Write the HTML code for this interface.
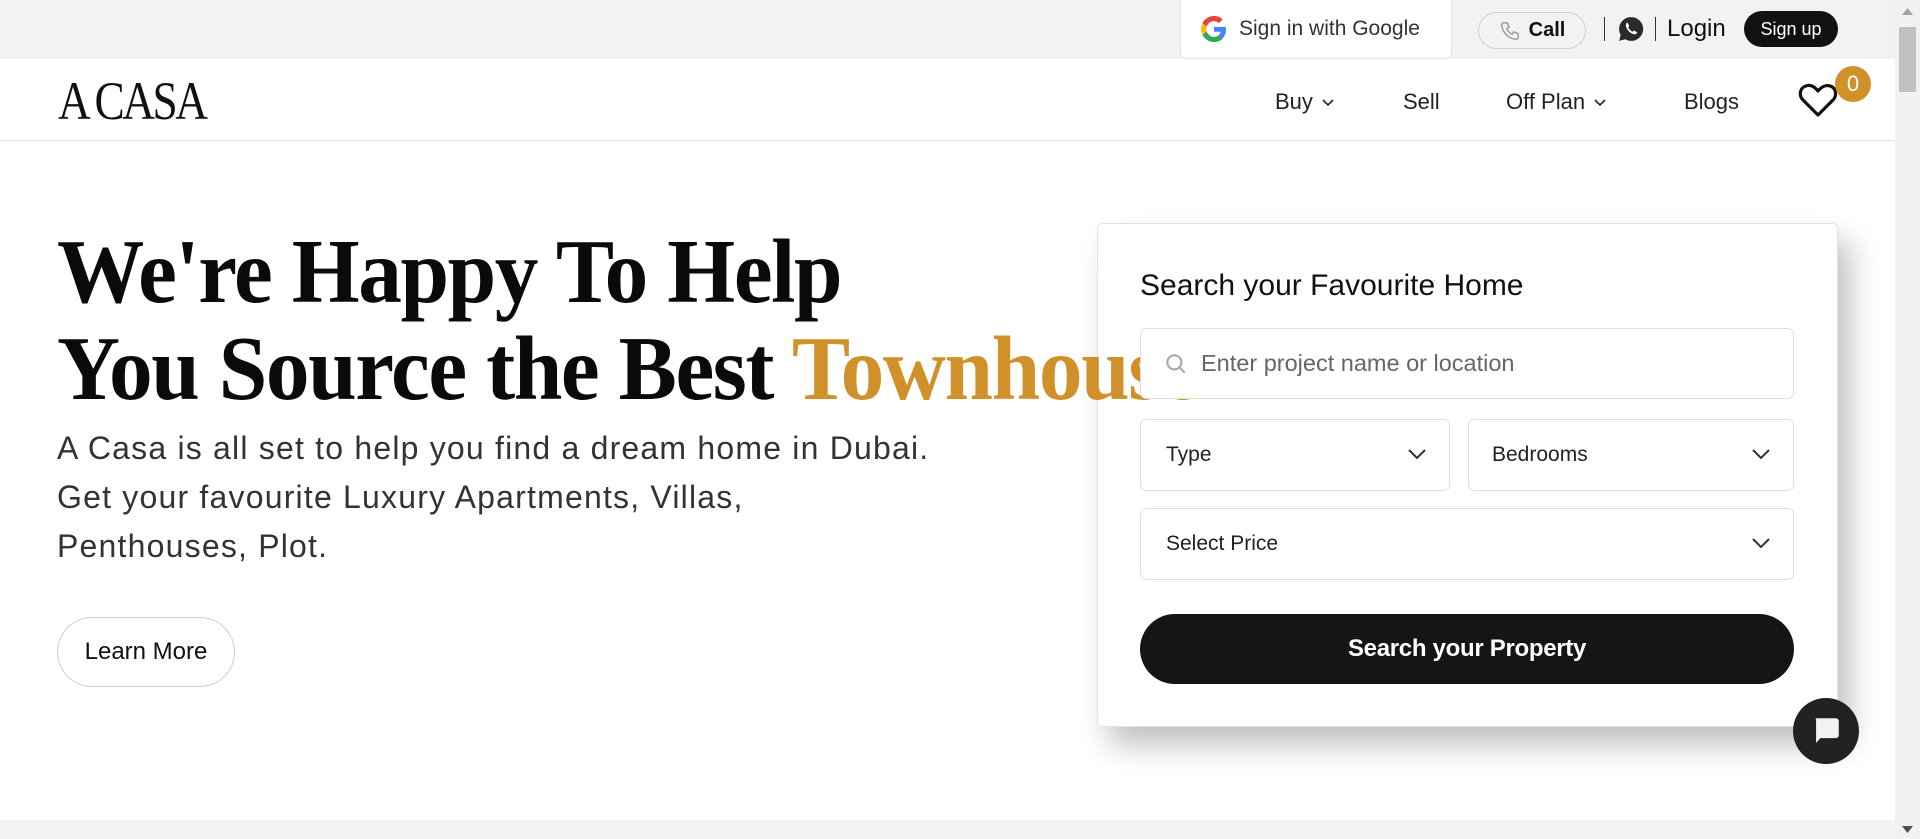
<!DOCTYPE html>
<html><head><meta charset="utf-8">
<style>
*{box-sizing:border-box;margin:0;padding:0}
html,body{width:1920px;height:839px;overflow:hidden;background:#fff;font-family:"Liberation Sans",sans-serif;color:#111}
.abs{position:absolute}
#top{left:0;top:0;width:1895px;height:59px;background:#f2f2f2}
#hdr{left:0;top:59px;width:1895px;height:82px;background:#fff;border-bottom:1px solid #e3e3e3}
.gbtn{left:1180px;top:0;width:272px;height:59px;background:#fff;border:1px solid #e3e3e3;border-top:none;border-radius:0 0 6px 6px;font-size:21px;color:#333;display:flex;align-items:center;padding-left:20px;gap:12px}
.call{left:1478px;top:12px;width:108px;height:37px;border:1px solid #cfcfcf;border-radius:19px;background:#f2f2f2;display:flex;align-items:center;justify-content:center;gap:8px;font-size:20px;font-weight:bold;color:#111}
.sep{top:17px;width:1px;height:24px;background:#333}
.login{left:1667px;top:15px;font-size:24px;color:#111}
.signup{left:1744px;top:11px;width:94px;height:36px;border-radius:18px;background:#111;color:#fff;font-size:18px;display:flex;align-items:center;justify-content:center}
.logo{left:58px;top:74px;font-family:"Liberation Serif",serif;font-size:54px;line-height:54px;transform:scaleX(0.84);transform-origin:left top;color:#111;letter-spacing:-3px;white-space:nowrap}
.nav{top:89px;font-size:22px;color:#222;display:flex;align-items:center;gap:8px}
.badge{left:1835px;top:66px;width:36px;height:36px;border-radius:50%;background:#d0912b;color:#fff;font-size:22px;display:flex;align-items:center;justify-content:center}
h1{position:absolute;z-index:2;left:57px;top:223px;font-family:"Liberation Serif",serif;font-weight:bold;font-size:91px;line-height:97px;letter-spacing:-1.5px;color:#0a0a0a;white-space:nowrap;transform:scaleX(0.96);transform-origin:left top}
h1 span{color:#d0912b}
.para{left:57px;top:424px;font-size:32px;line-height:49px;color:#333;letter-spacing:1.2px;white-space:nowrap}
.learn{left:57px;top:617px;width:178px;height:70px;border:1px solid #cfcfcf;border-radius:35px;font-size:24px;display:flex;align-items:center;justify-content:center;color:#111;background:#fff}
.card{z-index:1;left:1097px;top:223px;width:741px;height:504px;background:#fff;border:1px solid #e3e3e3;border-radius:5px;box-shadow:12px 18px 30px rgba(0,0,0,.25)}
.ctitle{z-index:3;left:1140px;top:269px;font-size:30px;color:#111}
.fld{z-index:3;border:1px solid #dedede;border-radius:6px;background:#fff;display:flex;align-items:center;font-size:21px;color:#222}
.chev{position:absolute;right:22px;top:50%;margin-top:-8px}
.sbtn{z-index:3;left:1140px;top:614px;width:654px;height:70px;border-radius:35px;background:#151515;color:#fff;font-size:24px;font-weight:bold;display:flex;align-items:center;justify-content:center;letter-spacing:-0.3px}
.chat{z-index:4;left:1793px;top:698px;width:66px;height:66px;border-radius:50%;background:#222;display:flex;align-items:center;justify-content:center}
#bot{left:0;top:820px;width:1895px;height:19px;background:#f4f4f4}
#sb{left:1895px;top:0;width:25px;height:839px;background:#f1f1f1}
</style></head><body>
<div class="abs" id="top"></div>
<div class="abs" id="hdr"></div>
<div class="abs gbtn">
<svg width="26" height="26" viewBox="0 0 48 48"><path fill="#EA4335" d="M24 9.5c3.5 0 6.6 1.2 9.1 3.6l6.8-6.8C35.8 2.4 30.3 0 24 0 14.6 0 6.6 5.4 2.7 13.3l7.9 6.2C12.5 13.6 17.8 9.5 24 9.5z"/><path fill="#4285F4" d="M46.1 24.5c0-1.6-.1-3.1-.4-4.5H24v9h12.4c-.5 2.9-2.2 5.4-4.7 7l7.6 5.9c4.4-4.1 6.8-10.1 6.8-17.4z"/><path fill="#FBBC05" d="M10.5 28.6c-.5-1.4-.8-3-.8-4.6s.3-3.2.8-4.6l-7.9-6.2C1 16.5 0 20.1 0 24s.9 7.5 2.7 10.7l7.8-6.1z"/><path fill="#34A853" d="M24 48c6.5 0 11.9-2.1 15.9-5.8l-7.6-5.9c-2.1 1.4-4.9 2.3-8.3 2.3-6.2 0-11.5-4.2-13.4-9.9l-7.9 6.1C6.6 42.6 14.6 48 24 48z"/></svg>
<span>Sign in with Google</span></div>
<div class="abs call"><svg width="22" height="22" viewBox="0 0 24 24" fill="none" stroke="#8a9a95" stroke-width="1.5"><path d="M5 3h4l2 5-2.5 1.5a11 11 0 0 0 6 6L16 13l5 2v4a2 2 0 0 1-2 2A17 17 0 0 1 3 5a2 2 0 0 1 2-2z"/></svg><span>Call</span></div>
<div class="abs sep" style="left:1604px"></div>
<svg class="abs" style="left:1618px;top:16px" width="26" height="26" viewBox="0 0 24 24"><path fill="#2a2a2a" d="M12 1a11 11 0 0 0-9.5 16.5L1 23l5.7-1.5A11 11 0 1 0 12 1z"/><path fill="#fff" d="M8 6.5c.3-.3.8-.3 1 .1l1.2 2.3c.2.4 0 .7-.2 1l-.6.6c.8 1.7 2.3 3.2 4 4l.7-.7c.3-.3.6-.4 1-.2l2.2 1.2c.4.2.4.7.1 1-.8 1-2 1.4-3.2.9A11 11 0 0 1 7.5 10c-.5-1.3-.3-2.6.5-3.5z"/></svg>
<div class="abs sep" style="left:1655px"></div>
<div class="abs login">Login</div>
<div class="abs signup">Sign up</div>
<div class="abs logo">A CASA</div>
<div class="abs nav" style="left:1275px">Buy <svg width="14" height="9" viewBox="0 0 14 9"><path d="M2 2l5 5 5-5" fill="none" stroke="#222" stroke-width="1.6"/></svg></div>
<div class="abs nav" style="left:1403px">Sell</div>
<div class="abs nav" style="left:1506px">Off Plan <svg width="14" height="9" viewBox="0 0 14 9"><path d="M2 2l5 5 5-5" fill="none" stroke="#222" stroke-width="1.6"/></svg></div>
<div class="abs nav" style="left:1684px">Blogs</div>
<svg class="abs" style="left:1798px;top:82px" width="40" height="36" viewBox="0 0 40 36"><path d="M20 33L5 18C1 14 1.5 7 6.5 4.5S16 4 20 9c4-5 9-6.5 13.5-4.5S39 14 35 18z" fill="none" stroke="#111" stroke-width="3.2" stroke-linejoin="round"/></svg>
<div class="abs badge">0</div>

<h1>We're Happy To Help<br>You Source the Best <span>Townhouse</span></h1>
<div class="abs para">A Casa is all set to help you find a dream home in Dubai.<br>Get your favourite Luxury Apartments, Villas,<br>Penthouses, Plot.</div>
<div class="abs learn">Learn More</div>

<div class="abs card"></div>
<div class="abs ctitle">Search your Favourite Home</div>
<div class="abs fld" style="left:1140px;top:328px;width:654px;height:71px;padding-left:22px;font-size:23.5px;color:#666">
<svg width="26" height="26" viewBox="0 0 24 24" fill="none" stroke="#aaa" stroke-width="2"><circle cx="10.5" cy="10.5" r="6.5"/><path d="M15.5 15.5l4.5 4.5"/></svg><span style="margin-left:12px">Enter project name or location</span></div>
<div class="abs fld" style="left:1140px;top:419px;width:310px;height:72px;padding-left:25px">Type<svg class="chev" width="20" height="14" viewBox="0 0 20 14"><path d="M2 3l8 8 8-8" fill="none" stroke="#333" stroke-width="2"/></svg></div>
<div class="abs fld" style="left:1468px;top:419px;width:326px;height:72px;padding-left:23px">Bedrooms<svg class="chev" width="20" height="14" viewBox="0 0 20 14"><path d="M2 3l8 8 8-8" fill="none" stroke="#333" stroke-width="2"/></svg></div>
<div class="abs fld" style="left:1140px;top:508px;width:654px;height:72px;padding-left:25px">Select Price<svg class="chev" width="20" height="14" viewBox="0 0 20 14"><path d="M2 3l8 8 8-8" fill="none" stroke="#333" stroke-width="2"/></svg></div>
<div class="abs sbtn">Search your Property</div>
<div class="abs chat"><svg width="34" height="34" viewBox="0 0 24 24"><path fill="#f2f2f2" d="M5 3h14a2 2 0 0 1 2 2v10a2 2 0 0 1-2 2H8l-3 3.5V5a2 2 0 0 1 0-2z"/></svg></div>
<div class="abs" id="bot"></div>
<div class="abs" id="sb"></div>
<div class="abs" style="left:1899px;top:27px;width:17px;height:65px;background:#c1c1c1"></div>
<svg class="abs" style="left:1902px;top:7px" width="11" height="8"><path d="M0 8L5.5 1 11 8z" fill="#a3a3a3"/></svg>
<svg class="abs" style="left:1902px;top:826px" width="11" height="8"><path d="M0 0L5.5 7 11 0z" fill="#505050"/></svg>
</body></html>
